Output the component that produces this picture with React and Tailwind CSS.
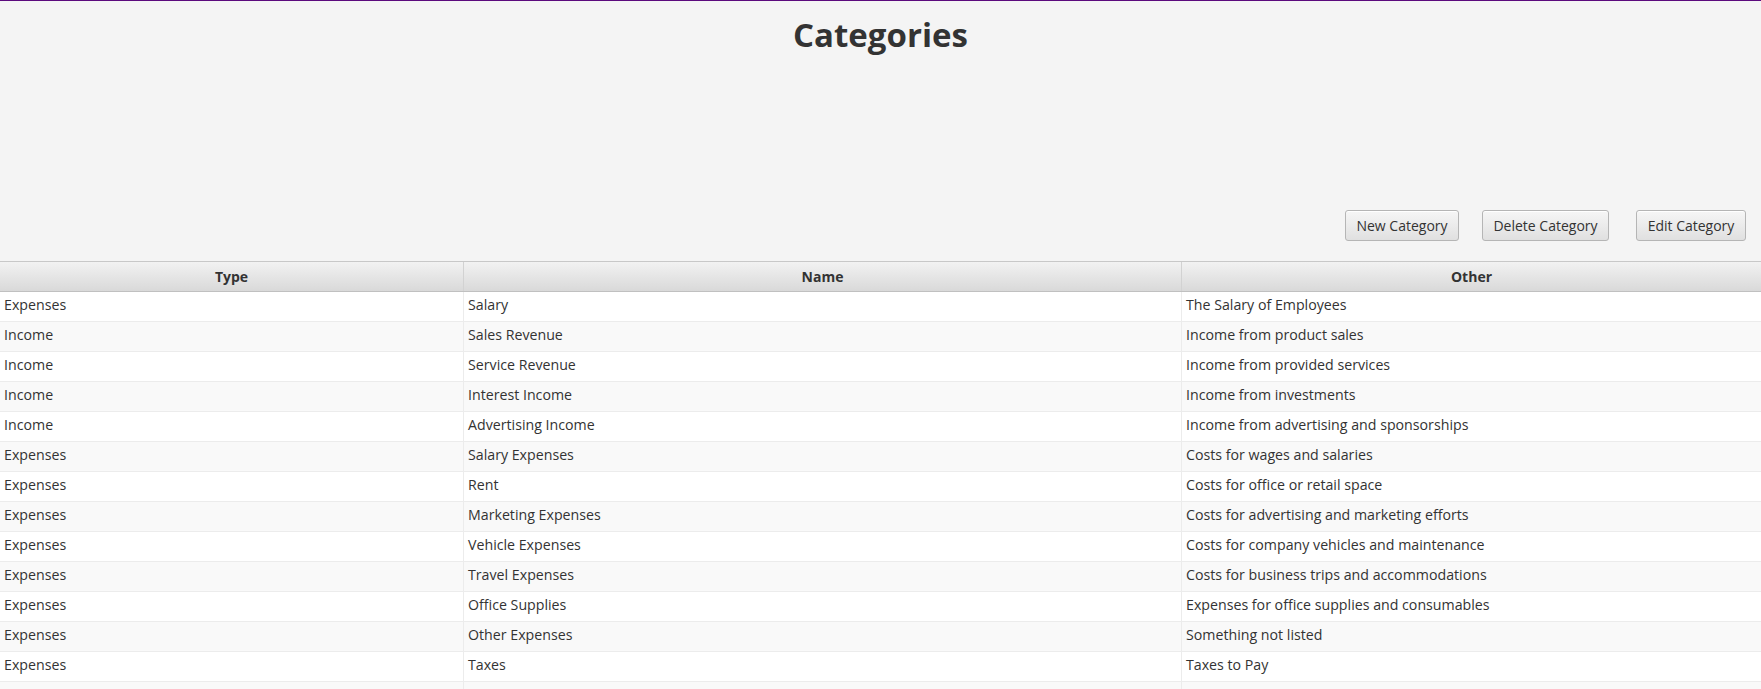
import React from 'react';

const rows = [
  ['Expenses', 'Salary', 'The Salary of Employees'],
  ['Income', 'Sales Revenue', 'Income from product sales'],
  ['Income', 'Service Revenue', 'Income from provided services'],
  ['Income', 'Interest Income', 'Income from investments'],
  ['Income', 'Advertising Income', 'Income from advertising and sponsorships'],
  ['Expenses', 'Salary Expenses', 'Costs for wages and salaries'],
  ['Expenses', 'Rent', 'Costs for office or retail space'],
  ['Expenses', 'Marketing Expenses', 'Costs for advertising and marketing efforts'],
  ['Expenses', 'Vehicle Expenses', 'Costs for company vehicles and maintenance'],
  ['Expenses', 'Travel Expenses', 'Costs for business trips and accommodations'],
  ['Expenses', 'Office Supplies', 'Expenses for office supplies and consumables'],
  ['Expenses', 'Other Expenses', 'Something not listed'],
  ['Expenses', 'Taxes', 'Taxes to Pay'],
  ['', '', ''],
];

function FxButton({ children, className = '' }) {
  return (
    <button
      className={`h-[31px] px-0 whitespace-nowrap rounded-[3px] border border-[#b5b5b5] bg-gradient-to-b from-[#f6f6f6] to-[#e0e0e0] text-[14px] text-[#333] shadow-[inset_0_1px_0_#fff] ${className}`}
    >
      {children}
    </button>
  );
}

export default function App() {
  return (
    <div
      className="w-[1761px] h-[689px] overflow-hidden bg-[#f4f4f4] text-[#333]"
      style={{ fontFamily: '"Open Sans", "Noto Sans", sans-serif' }}
    >
      <div className="h-px bg-[#5b0a7d]"></div>

      {/* top area: title and action buttons */}
      <div className="h-[260px] flex flex-col">
        <h1 className="text-center text-[33px] font-bold leading-none pt-[17px] text-[#333]">
          Categories
        </h1>
        <div className="flex-1"></div>
        <div className="flex justify-end items-center pr-[15px] pb-[20px]">
          <FxButton className="w-[114px]">New Category</FxButton>
          <FxButton className="w-[127px] ml-[23px]">Delete Category</FxButton>
          <FxButton className="w-[110px] ml-[27px]">Edit Category</FxButton>
        </div>
      </div>

      {/* table */}
      <div className="border-t border-[#c8c8c8]">
        <div className="grid grid-cols-[464px_718px_1fr] h-[30px] bg-gradient-to-b from-[#f2f2f2] to-[#d9d9d9] border-b border-[#c0c0c0] text-[14px] font-bold">
          <div className="flex items-center justify-center border-r border-[#d2d2d2]">Type</div>
          <div className="flex items-center justify-center border-r border-[#d2d2d2]">Name</div>
          <div className="flex items-center justify-center">Other</div>
        </div>
        {rows.map((r, i) => (
          <div
            key={i}
            className={`grid grid-cols-[464px_718px_1fr] h-[30px] border-b border-[#ececec] text-[14.2px] ${
              i % 2 === 0 ? 'bg-white' : 'bg-[#f9f9f9]'
            }`}
          >
            <div className="flex items-center pl-[4px] pb-[3px] border-r border-[#ececec]">{r[0]}</div>
            <div className="flex items-center pl-[4px] pb-[3px] border-r border-[#ececec]">{r[1]}</div>
            <div className="flex items-center pl-[4px] pb-[3px]">{r[2]}</div>
          </div>
        ))}
      </div>
    </div>
  );
}
